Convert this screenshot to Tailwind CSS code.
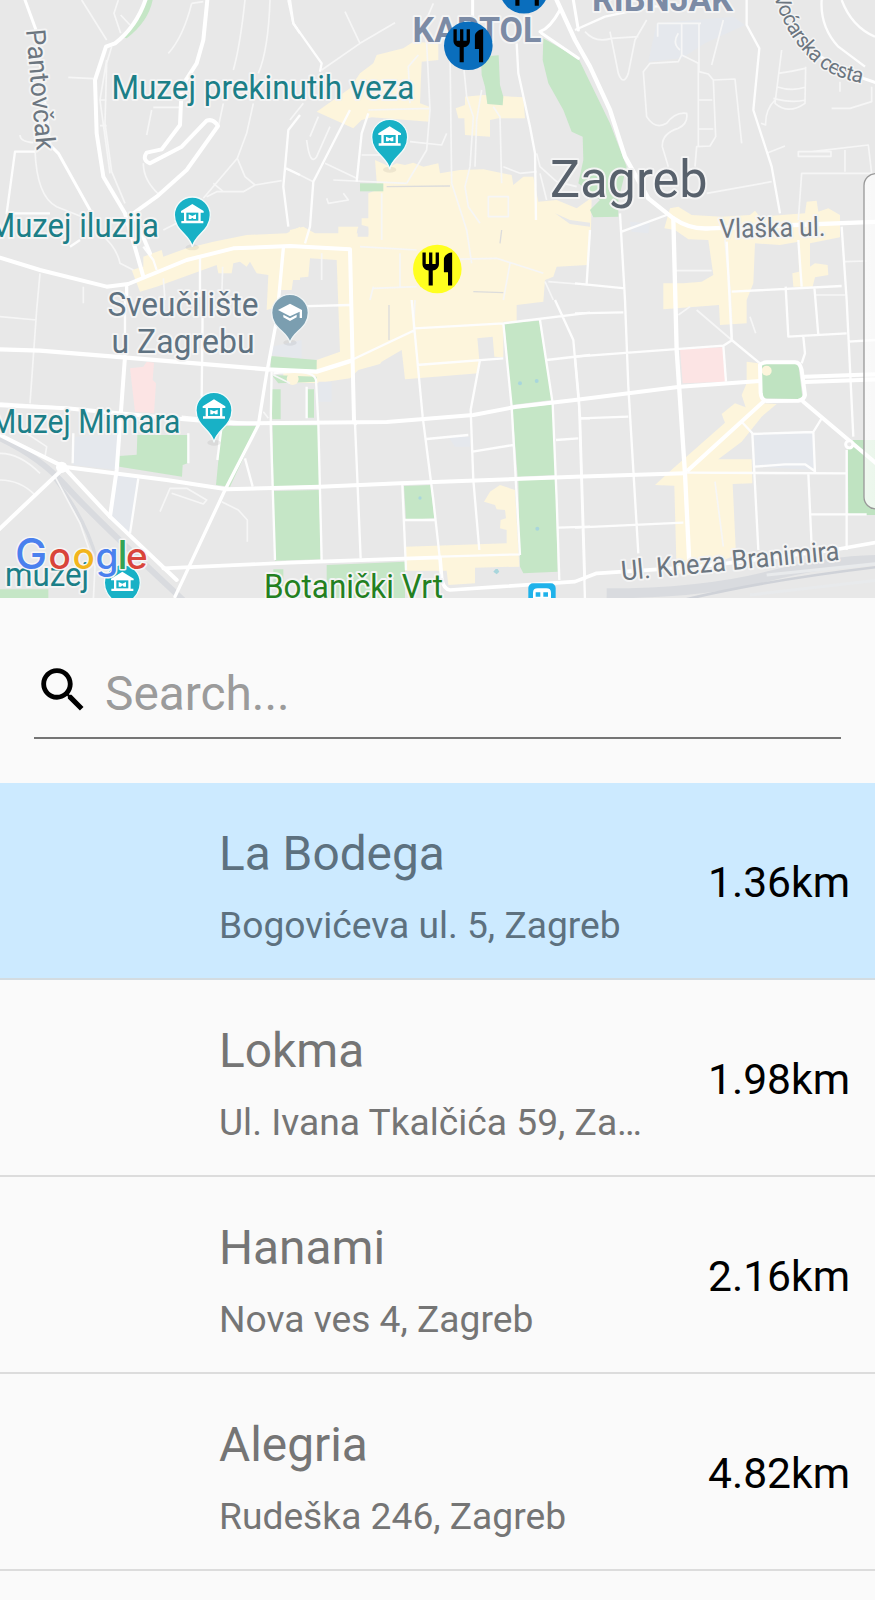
<!DOCTYPE html>
<html lang="hr">
<head>
<meta charset="utf-8">
<title>Restaurants</title>
<script src="https://cdn.jsdelivr.net/npm/@tailwindcss/browser@4"></script>
</head>
<body class="bg-[#fafafa] font-['Roboto',sans-serif]">
<main class="flex h-[1600px] w-[875px] flex-col overflow-hidden bg-[#fafafa]">

<section class="h-[598px] shrink-0 overflow-hidden bg-[#e8e8e8]">
<svg width="875" height="598" viewBox="0 0 875 598" class="block" font-family="Roboto, sans-serif">
<defs>
  <g id="museum">
    <ellipse cx="0" cy="97" rx="20" ry="9" fill="#000" opacity=".06"/>
    <path d="M0,96 C-7,58 -54,48 -54,0 A54,54 0 1 1 54,0 C54,48 7,58 0,96Z" fill="#18b1c6" stroke="#f3fafa" stroke-width="4"/>
    <path d="M-34,-12 L0,-33 L34,-12 V-7 H-34Z M-25,-8 H25 V18 H33 V25 H-33 V18 H-25Z" fill="#fff"/>
    <path d="M-18,-7 H18 V17 H-18Z" fill="#18b1c6"/>
    <path d="M-11,-2 L0,3 L11,-2 V12 H4 L0,8 L-4,12 H-11Z" fill="#fff"/>
  </g>
  <path id="food" d="M11 9H9V2H7v7H5V2H3v7c0 2.12 1.66 3.84 3.75 3.97V22h2.5v-9.03C11.34 12.84 13 11.12 13 9V2h-2v7zm5-3v8h2.5v8H21V2c-2.76 0-5 2.24-5 4z"/>
  <path id="vocarska" d="M774,-4 C782,24 798,53 825,70 C838,78 850,81 880,87"/>
  <linearGradient id="sheet"><stop offset="0" stop-color="#fff" stop-opacity=".75"/><stop offset="1" stop-color="#fff" stop-opacity=".6"/></linearGradient>
</defs>

<!-- Land use -->
<g transform="scale(.33333)">
  <g fill="#fdf5dc">
    <path d="M900,680 L860,700 L740,705 L640,725 L560,745 L490,770 L485,750 L430,770 L430,800 L395,810 L420,875 L470,860 L650,795 L655,820 L695,820 L700,790 L720,785 L740,800 L750,785 L770,820 L805,825 L800,930 L835,920 L840,840 L900,840Z"/>
    <g transform="translate(870 0)">
      <path d="M80,335 L180,265 L210,220 L250,190 L260,165 L340,145 L370,125 L445,130 L445,180 L395,185 L390,310 L418,320 L418,365 L245,352 L215,360 L190,385Z"/>
      <path d="M497,325 L525,315 L525,290 L580,285 L700,292 L705,355 L625,355 L600,360 L600,410 L525,405 L523,355 L505,355Z"/>
      <path d="M255,480 L300,500 L320,490 L345,495 L370,488 L400,500 L445,490 L450,520 L510,510 L580,508 L665,525 L670,555 L700,530 L730,530 L745,605 L800,600 L860,625 L895,600 L905,590 L903,690 L893,795 L800,800 L790,830 L765,840 L760,905 L680,915 L680,965 L640,965 L640,1072 L613,1070 L608,1010 L562,1015 L568,1080 L565,1120 L345,1138 L335,1050 L275,1085 L270,1092 L205,1110 L180,1135 L80,1150 L-20,1145 L-20,1115 L75,1110 L80,1080 L150,1055 L140,780 L60,775 L55,830 L10,835 L5,870 L-35,870 L0,690 L40,680 L75,700 L145,700 L145,680 L205,680 L200,700 L235,705 L235,680 L215,675 L215,655 L235,655 L235,580 L260,570 L260,545Z"/>
    </g>
    <g transform="translate(1725 0)">
      <path d="M285,625 L310,620 L350,645 L440,650 L525,645 L540,632 L555,650 L690,640 L695,605 L725,602 L730,635 L760,625 L795,645 L795,712 L705,730 L705,800 L720,790 L758,795 L760,825 L720,832 L713,860 L655,860 L652,820 L672,815 L670,725 L615,735 L540,730 L535,850 L515,900 L515,970 L435,975 L432,915 L265,928 L265,850 L325,850 L380,845 L415,825 L400,720 L340,718 L300,690 L268,685Z"/>
      <path d="M515,1085 L550,1090 L560,1210 L605,1212 L560,1250 L500,1325 L430,1378 L530,1378 L532,1450 L473,1452 L483,1665 L340,1725 L305,1720 L298,1457 L240,1455 L295,1405 L450,1268 L440,1242 L480,1210 L512,1222 L500,1185 L515,1150Z"/>
    </g>
    <g transform="translate(870 900)">
      <path d="M582,605 L600,575 L630,555 L675,570 L688,800 L555,803 L555,850 L475,855 L470,812 L345,812 L347,740 L650,730 L650,690 L630,685 L632,660 L648,655 L645,630 L620,628 L615,615Z"/>
    </g>
  </g>
  <g fill="#e8e8e8">
    <path d="M1073,685 h32 v25 h-32z M1665,640 L1710,660 L1770,668 L1770,680 L1710,672Z"/>
  </g>
  <g fill="#c5e6c6">
    <path d="M435,0 L458,0 Q445,65 380,115 L370,112 Q425,60 435,0Z"/>
    <path d="M1443,170 L1496,166 L1500,255 L1510,290 L1508,316 L1462,312 L1455,260 L1445,225Z"/>
    <path d="M1630,115 L1735,175 L1830,370 L1880,500 L1855,600 L1855,650 L1780,652 L1770,630 L1800,600 L1735,550 L1750,480 L1748,410 L1715,395 L1690,330 L1645,250 L1628,180Z"/>
    <path d="M1080,550 h70 v24 h-70z"/>
    <g transform="translate(0 900)">
      <path d="M358,468 L410,464 L412,405 L565,405 L563,490 L548,495 L546,530 L358,500Z"/>
      <path d="M665,378 L775,378 L690,560 L648,555Z M812,168 L950,180 V210 L812,205Z M815,225 L950,230 V245 L835,250Z M812,268 h30 v90 h-25z M918,268 h24 v85 h-24z M818,376 L955,376 L958,555 L820,560Z M820,573 L958,570 L962,778 L825,782Z M980,795 L1215,785 L1215,900 L980,900Z M0,868 h145 v32 h-145z M820,808 h30 v50 h-30z"/>
    </g>
    <g transform="translate(870 900)">
      <path d="M643,70 L748,62 L785,300 L665,315Z M667,328 L787,313 L795,525 L683,530Z M685,540 L797,538 L803,815 L700,820 L690,800Z M342,558 L422,555 L433,655 L348,660Z"/>
    </g>
    <g transform="translate(1725 900)">
      <path d="M558,192 L670,192 L682,290 L670,297 L562,295Z M818,420 h90 v225 h-88z" fill="#bfe3c1"/>
    </g>
  </g>
  <g fill="#fce4e4"><path d="M390,1105 L430,1100 L440,1085 L462,1088 L458,1140 L468,1150 L462,1240 L405,1235Z M2040,1048 L2168,1042 L2178,1145 L2048,1150Z"/></g>
  <g fill="#e5e8ed">
    <path d="M1970,70 L2200,50 L2235,75 L2115,130 L2045,175 L1945,185Z M1890,665 L1950,670 L1945,700 L1895,695Z M225,1310 L355,1305 L350,1410 L218,1395Z M350,1425 L412,1430 L390,1610 L330,1560Z M2262,1302 L2440,1298 L2445,1410 L2265,1400Z M815,1040 L905,1020 L905,1075 L815,1065Z M955,1145 h40 v60 h-40z M1345,1310 h65 v30 h-45z"/>
  </g>
  <circle cx="878" cy="1137" r="18" fill="#fdf5dc"/><circle cx="2300" cy="1112" r="15" fill="#fdf5dc"/>
  <g fill="#a9d6dc"><circle cx="1560" cy="1150" r="6"/><circle cx="1610" cy="1143" r="6"/><circle cx="1260" cy="1494" r="5"/><circle cx="1612" cy="1586" r="6"/><path d="M1480,1715 l7,-8 h6 l5,8 -8,8z"/></g>

  <!-- Railway -->
  <g fill="none" stroke="#d9dbdf">
    <path d="M-10,1310 Q120,1370 200,1460 T560,1810" stroke-width="18"/>
    <path d="M160,1430 Q260,1560 290,1680" stroke-width="10"/>
    <path d="M1820,1780 Q2100,1780 2300,1730 T2640,1680 M1830,1810 H2640" stroke-width="30"/>
    <path d="M2050,1800 Q2300,1740 2640,1700" stroke-width="8" stroke="#cfd2d8"/>
    <path d="M2300,1725 L2640,1690 M2250,1785 L2640,1740" stroke="#e8eaec" stroke-width="9"/>
  </g>

  <!-- Minor streets -->
  <g fill="none" stroke="#f6f6f6" stroke-width="5" stroke-linejoin="round">
    <path d="M245,0 L320,120 M355,0 L342,40 L362,100 M362,45 L390,75 M575,10 L610,5 M575,10 Q550,110 505,160 M735,0 Q720,140 700,210 M810,0 Q805,150 775,220 M205,232 L280,236 M320,180 L300,300 L330,520 M335,140 L320,190 L315,370 L335,515 L375,610 M300,300 h20 M300,377 h20 M460,322 h85 M455,330 L440,405 M670,310 L655,380 M760,310 L740,400 L712,475 L610,595 M712,475 L735,530 L765,555 L845,542 M765,555 L730,575 L650,575 L620,590 M640,550 L670,575 M105,450 Q110,590 170,620 L270,660 M60,405 Q60,425 100,428 M430,490 Q430,540 475,582 M300,700 Q350,740 360,790 L400,810 M490,690 L530,670 M490,835 L495,900 M668,800 L665,900 M120,820 L110,930 L90,1210 M250,860 V900 M0,950 L110,960"/>
    <g transform="translate(870 0)">
      <path d="M95,210 L210,130 L315,68 M165,35 L210,130 M0,360 L40,310 M50,420 Q60,500 80,470 L120,380 M60,410 L85,350 M0,510 L70,545 M105,490 L200,535 M130,540 L350,550 M215,465 h60 M160,580 L175,600 L115,610 L110,595 M360,310 L355,200 L385,165 M235,330 L420,325 M430,10 L400,80 L410,130 L420,330 L410,450 L350,550 M480,150 L485,550 L530,690 L545,790 M520,190 L530,290 L550,350 L540,500 L525,560 L535,620 L570,670 M575,270 L560,360 L555,500 M610,320 L630,350 L635,550 M470,400 L455,435 L360,425 M640,500 L690,520 L740,515 M740,460 L750,500 L800,545 L860,560 M750,520 L770,600 M595,590 h60 v60 h-60z M275,580 V720 M330,760 V860 M250,860 L240,900 M250,865 L380,860 M380,780 L620,775 L760,820 M660,790 L640,900 M95,760 V840 M375,900 L370,1000 M210,740 L380,750 M765,845 L790,900 M775,845 L900,855"/>
      <path d="M290,560 L480,558 M635,690 L630,730 M550,875 L640,878 M297,915 V1020" stroke="#dcdcdc" stroke-width="4"/>
    </g>
    <g transform="translate(1725 0)">
      <path d="M30,95 Q60,130 110,115 L190,110 M105,95 L130,220 Q145,260 160,220 L180,120 L215,60 M248,70 h130 M248,70 v40 M320,70 V165 L370,190 V440 M320,165 L310,185 L225,190 L205,215 L215,350 Q240,390 275,370 Q300,335 335,340 Q340,370 310,385 Q260,400 262,440 L280,500 M310,100 Q290,130 315,150 M372,70 V215 L400,222 L415,240 L422,410 L405,438 L365,440 L360,500 M445,60 L410,195 M415,240 L480,237 L500,430 M370,300 h42 M370,387 h45 M575,460 L630,438 M395,580 L590,545 M620,150 L600,310 Q640,345 690,310 L692,200 M610,220 Q650,215 690,205 M605,260 Q650,275 690,262 M595,295 Q650,310 692,300 M600,300 Q570,330 572,375 L558,370 M770,325 L825,325 L890,305 V260 M670,455 h98 v14 h-98z M710,455 L880,435 L890,520 L680,520 L670,660 M810,450 V515 M795,245 v30 M450,720 L465,870 L472,1020 M300,812 h110 M810,785 L875,783 M720,885 h90 M365,930 L470,1020 M525,950 L542,1000 M310,945 L345,920 M420,1445 L445,1640"/>
    </g>
    <g transform="translate(0 900)"><path d="M80,400 L140,440 L135,470 M480,635 L510,565 L560,565 L620,600 L610,612 L515,580 M665,605 L715,630 L742,660 V725 M250,0 V10 M165,530 L240,670 L285,800 L280,900 M0,540 Q60,540 105,585 M0,460 Q60,460 120,520 M790,335 L805,355 M820,225 L870,250"/></g>
  </g>

  <!-- Local streets -->
  <g fill="none" stroke="#fdfdfd" stroke-width="7" stroke-linejoin="round">
    <path d="M865,0 L880,70 L900,100 M900,345 L865,390 L855,505 L850,560 L865,680 M858,505 L900,525 M105,455 H45 L20,640 L150,640 M430,740 L460,780 L470,810 M210,740 L240,720"/>
    <g transform="translate(870 0)"><path d="M0,0 L10,70 L95,190 L90,215 M235,340 L215,400 L200,545 M180,330 L70,545 L60,680 L45,730 M680,130 L685,220 L720,380 L735,460 L738,660"/></g>
    <g transform="translate(1725 0)"><path d="M0,90 L90,50 L230,20 L400,10 M515,0 L515,75 L553,145 L535,330 L590,500 L615,640 M740,0 Q735,80 790,140 L870,200 M800,0 Q830,80 900,110 M135,640 L150,900 L160,1160 L190,1660 M140,695 L275,645 M45,690 L35,850 M800,680 L815,900 L835,1310 M0,850 L150,865 M470,875 L800,858 M632,860 L640,1010 L815,1000 M718,860 L730,1005 M670,720 L680,860 M455,725 L470,1020 L555,1090 M472,1020 L445,1037 L0,1070 M445,1037 L453,1145 M685,1010 L690,1060 L680,1090 M820,1025 L900,1020 M500,1265 L532,1300 L550,1650 M532,1302 L715,1296 L740,1255 M715,1296 L720,1418 M540,1400 L630,1393 L690,1393 L718,1412 M330,1418 L815,1420 M700,1420 L710,1640 M705,1543 L875,1543 M815,1350 V1650 M15,1255 L160,1250 M0,1583 L325,1568 M0,1070 L12,1200 L30,1800 M0,940 L145,937"/></g>
    <g transform="translate(0 900)">
      <path d="M608,30 L605,290 M600,-10 V-130 M375,0 V165 M545,350 L750,370 M652,480 L665,378 M735,475 L758,560 M415,535 L390,700 M220,400 L218,490 M815,215 L812,370 L825,780 M820,220 Q940,205 948,240 L955,370 L965,780 M920,260 V355 M0,310 L180,322 M565,400 V490 M870,20 L1050,15"/>
    </g>
    <g transform="translate(870 900)">
      <path d="M365,0 L398,350 L430,600 L450,780 M195,370 L212,775 M337,555 L348,810 M345,660 H435 M375,85 L640,70 L900,38 M380,195 L640,175 M570,180 L542,330 L550,540 L568,750 M410,417 L535,405 M548,455 L670,435 M640,70 L665,320 L690,765 M750,60 L788,310 L800,600 L808,840 M795,0 L850,120 L870,350 L885,840 M770,180 L900,165 M870,355 h30 M798,420 L865,415 M805,683 L900,680 M185,180 L375,90 M450,770 L690,763"/>
    </g>
  </g>

  <!-- Main roads -->
  <g fill="none" stroke="#fff" stroke-width="12" stroke-linejoin="round" stroke-linecap="round">
    <path d="M75,0 L108,90 L150,435 L175,460 L270,630" stroke-width="9"/>
    <path d="M438,-5 Q410,80 345,130 L318,140 L285,240 L290,400 L310,530 L375,640 L410,760 L430,830"/>
    <path d="M622,0 L610,120 L590,190 L545,260 L540,375 L485,448 L440,458 Q425,480 450,490 L545,440 L620,362 Q640,355 654,378 L560,510 L470,590 L400,640 L450,760"/>
    <path d="M0,773 L120,810 L320,860 L385,852 L560,780 L700,745 L870,738 L1050,748 L1062,1260 L1066,1270"/>
    <path d="M850,745 L830,960 L800,1120 L775,1275 L675,1470 L525,1790 M380,860 V900" stroke-width="10"/>
    <path d="M-5,1048 L120,1052 L370,1072 L800,1108 L950,1115 L1055,1082" stroke-width="13"/>
    <path d="M375,1070 L350,1410 L330,1550 M-10,1215 L200,1225 L480,1252 L700,1270 L1160,1266 L1420,1245 L1550,1220 L1725,1200 L2040,1160 L2280,1143"/>
    <path d="M-10,1300 L190,1400 L500,1440 L680,1468 L960,1460 L1200,1450 L1725,1430 L2055,1420 M190,1400 L330,1550 L530,1740 M180,1415 L-5,1590"/>
    <path d="M490,1705 L870,1688 L1320,1672 L1325,1735 Q1330,1768 1350,1770 L1500,1760 L1725,1745 L1790,1720 L2100,1700 L2500,1650 L2640,1625" stroke-width="11"/>
    <path d="M1670,0 L1725,120 L1770,200 L1830,330 L1875,470 L1945,595 L2020,655 Q2070,690 2130,685 L2640,665" stroke-width="13"/>
    <path d="M1680,30 Q1650,85 1620,95 M1735,90 L1720,0 M1418,0 V60 M1625,100 L1735,175" stroke-width="9"/>
    <path d="M2020,655 L2030,1050 L2055,1420 L2068,1690" stroke-width="13"/>
    <path d="M2280,1095 Q2285,1088 2300,1087 L2385,1087 Q2400,1087 2405,1110 L2415,1185 Q2412,1200 2395,1202 L2300,1203 Q2285,1202 2282,1180Z M2290,1205 L2065,1410 M2415,1130 L2640,1122 M2415,1146 L2640,1138 M2410,1205 L2640,1400"/>
    <circle cx="2548" cy="1333" r="11" fill="#e8e8e8" stroke-width="9"/>
    <path d="M2460,170 L2590,235 L2640,252" stroke-width="9"/>
  </g>
  <circle cx="185" cy="1402" r="17" fill="#fff"/>

  <!-- Place pins -->
  <use href="#museum" x="577" y="645"/>
  <use href="#museum" x="1169" y="412"/>
  <use href="#museum" x="642" y="1231"/>
  <use href="#museum" x="367" y="1748"/>
  <g transform="translate(870 938)">
    <ellipse cx="0" cy="90" rx="20" ry="9" opacity=".06"/>
    <path d="M0,91 C-7,56 -55,48 -55,0 A55,55 0 1 1 55,0 C55,48 7,56 0,91Z" fill="#7b9eb0" stroke="#f0f4f5" stroke-width="4"/>
    <path d="M-36,-8 L0,-27 L36,-8 V16 H29 V-3 L0,11Z M-20,6 L0,17 L20,6 V14 L0,25 L-20,14Z" fill="#fff"/>
  </g>
  <g transform="translate(1585 1750)"><rect width="82" height="90" rx="14" fill="#1fb2ea"/><path d="M14,50 V28 Q14,15 28,15 H54 Q68,15 68,28 V50 H14Z" fill="#fff"/><path d="M22,27 h14 v13 h-14z M45,27 h14 v13 h-14z" fill="#1fb2ea"/></g>
</g>

<!-- Labels -->
<g stroke="#f4f4f4" stroke-width="4" stroke-linejoin="round" paint-order="stroke" font-size="33">
  <g fill="#1c7f88">
    <text x="111.500" y="98.700" textLength="303" lengthAdjust="spacingAndGlyphs">Muzej prekinutih veza</text>
    <text x="-12" y="237" textLength="171" lengthAdjust="spacingAndGlyphs">Muzej iluzija</text>
    <text x="-10" y="432.500" textLength="190.500" lengthAdjust="spacingAndGlyphs">Muzej Mimara</text>
    <text x="5" y="585.700" textLength="84" lengthAdjust="spacingAndGlyphs">muzej</text>
  </g>
  <text x="264" y="598" textLength="179" lengthAdjust="spacingAndGlyphs" fill="#23801f">Botanički Vrt</text>
  <g fill="#5f7281">
    <text x="107.500" y="315.500" textLength="151" lengthAdjust="spacingAndGlyphs">Sveučilište</text>
    <text x="111.500" y="353" textLength="143" lengthAdjust="spacingAndGlyphs">u Zagrebu</text>
  </g>
  <g fill="#7c8ba5" font-weight="700" font-size="35.500">
    <text x="412.500" y="42" textLength="129" lengthAdjust="spacingAndGlyphs">KAPTOL</text>
    <text x="592" y="10.500" textLength="141" lengthAdjust="spacingAndGlyphs">RIBNJAK</text>
  </g>
  <text x="550" y="197" font-size="52" textLength="157.500" lengthAdjust="spacingAndGlyphs" fill="#58616c">Zagreb</text>
  <g fill="#6c7680">
    <text transform="translate(26 30) rotate(85)" font-size="27" textLength="121" lengthAdjust="spacingAndGlyphs">Pantovčak</text>
    <text transform="translate(719.500 238) rotate(-1.200)" font-size="26.500" textLength="106" lengthAdjust="spacingAndGlyphs">Vlaška ul.</text>
    <text transform="translate(622 580.500) rotate(-5.400)" font-size="27.500" textLength="219" lengthAdjust="spacingAndGlyphs">Ul. Kneza Branimira</text>
    <text font-size="21" stroke-width="3"><textPath href="#vocarska" textLength="131">Voćarska cesta</textPath></text>
  </g>
</g>

<!-- Restaurant markers -->
<g><circle cx="524" cy="-10.700" r="24.300" fill="#0a6ebd"/><use href="#food" transform="translate(504.200 -30.500) scale(1.650)"/></g>
<g><circle cx="468.300" cy="45.700" r="24.300" fill="#0a6ebd"/><use href="#food" transform="translate(448.500 25.900) scale(1.650)"/></g>
<g><circle cx="437.300" cy="269" r="24.300" fill="#ffff1f"/><use href="#food" transform="translate(417.500 249.200) scale(1.650)"/></g>

<!-- Google attribution -->
<text y="568.500" font-family="Inter, sans-serif" font-weight="500" font-size="43" stroke="#f6f6f6" stroke-width="3" paint-order="stroke" stroke-linejoin="round"><tspan x="15" fill="#4a80ee">G</tspan><tspan x="48.500" fill="#d9453b" font-size="37">o</tspan><tspan x="72.500" fill="#f2b51d" font-size="37">o</tspan><tspan x="95.500" fill="#4a80ee" font-size="37">g</tspan><tspan x="117.500" fill="#34a353" font-size="40">l</tspan><tspan x="126" fill="#d9453b" font-size="37">e</tspan></text>

<rect x="864" y="173.500" width="30" height="335.500" rx="12" fill="url(#sheet)" stroke="#999" stroke-width="1.300"/>
</svg>
</section>

<section class="h-[185px] shrink-0 px-[34px] pt-[63px]">
  <div class="flex h-[78px] border-b-2 border-[#757575]">
    <svg viewBox="0 0 24 24" class="size-[58px] shrink-0"><path d="M15.500 14h-.79l-.28-.27C15.410 12.590 16 11.110 16 9.500 16 5.910 13.090 3 9.500 3S3 5.910 3 9.500 5.910 16 9.500 16c1.610 0 3.090-.59 4.230-1.570l.27.28v.79l5 4.990L20.490 19l-4.990-5zm-6 0C7.010 14 5 11.990 5 9.500S7.010 5 9.500 5 14 7.010 14 9.500 11.990 14 9.500 14z"/></svg>
    <input type="text" placeholder="Search..." class="mt-[5px] ml-[13px] h-14 min-w-0 flex-1 bg-transparent text-[47.8px] leading-[56px] outline-none placeholder:text-[#9b9b9b]">
  </div>
</section>

<ul class="shrink-0 text-[#757575]">
  <li class="flex h-[197px] items-center justify-between border-b-2 border-[#d3dce1] bg-[#cceaff] pr-[25px] pl-[219px] text-[#5d717f]">
    <div class="pt-[11px]"><h2 class="text-[47.8px] leading-[56px]">La Bodega</h2><p class="mt-[21px] text-[37.2px] leading-[44px]">Bogovićeva ul. 5, Zagreb</p></div>
    <span class="pt-0.5 text-[42.6px] leading-[50px] text-black">1.36km</span>
  </li>
  <li class="flex h-[197px] items-center justify-between border-b-2 border-[#dcdcdc] pr-[25px] pl-[219px]">
    <div class="pt-[11px]"><h2 class="text-[47.8px] leading-[56px]">Lokma</h2><p class="mt-[21px] text-[37.2px] leading-[44px]">Ul. Ivana Tkalčića 59, Za…</p></div>
    <span class="pt-0.5 text-[42.6px] leading-[50px] text-black">1.98km</span>
  </li>
  <li class="flex h-[197px] items-center justify-between border-b-2 border-[#dcdcdc] pr-[25px] pl-[219px]">
    <div class="pt-[11px]"><h2 class="text-[47.8px] leading-[56px]">Hanami</h2><p class="mt-[21px] text-[37.2px] leading-[44px]">Nova ves 4, Zagreb</p></div>
    <span class="pt-0.5 text-[42.6px] leading-[50px] text-black">2.16km</span>
  </li>
  <li class="flex h-[197px] items-center justify-between border-b-2 border-[#dcdcdc] pr-[25px] pl-[219px]">
    <div class="pt-[11px]"><h2 class="text-[47.8px] leading-[56px]">Alegria</h2><p class="mt-[21px] text-[37.2px] leading-[44px]">Rudeška 246, Zagreb</p></div>
    <span class="pt-0.5 text-[42.6px] leading-[50px] text-black">4.82km</span>
  </li>
</ul>
</main>
</body>
</html>
